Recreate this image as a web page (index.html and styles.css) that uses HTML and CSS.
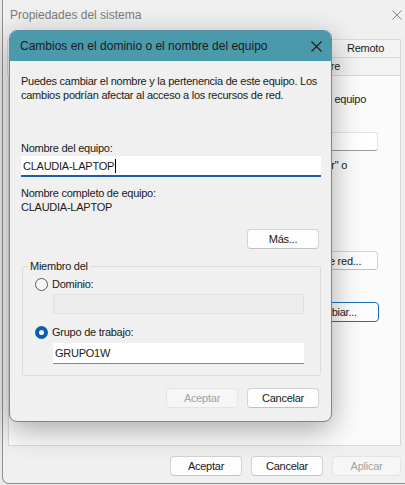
FILE: index.html
```html
<!DOCTYPE html>
<html lang="es">
<head>
<meta charset="utf-8">
<title>Propiedades del sistema</title>
<link rel="stylesheet" href="styles.css">
</head>
<body>
<div class="window">
  <div class="win-title">
    <span class="win-title-text">Propiedades del sistema</span>
    <svg class="win-close" width="10" height="10" viewBox="0 0 10 10"><path d="M0.5 0.5L9.5 9.5M9.5 0.5L0.5 9.5" stroke="#8a8a8a" stroke-width="1" fill="none"/></svg>
  </div>
  <div class="tabs">
    <div class="tab-row">
      <div class="tab tab-wide"></div>
      <div class="tab tab-wide"></div>
      <div class="tab tab-remote">Remoto</div>
    </div>
    <div class="tab-row">
      <div class="tab tab-first"></div>
      <div class="tab tab-hw"><span class="clip-right"><span>Hardware</span></span></div>
    </div>
  </div>
  <div class="panel">
    <div class="panel-right">
      <p class="pline pline-a">identificar su equipo</p>
      <div class="desc-box"></div>
      <p class="pline pline-b">"PC del comedor" o</p>
      <div class="btn btn-netid">Id. de red...</div>
      <div class="btn btn-change">Cambiar...</div>
    </div>
  </div>
  <div class="win-buttons">
    <div class="btn btn-main">Aceptar</div>
    <div class="btn btn-main">Cancelar</div>
    <div class="btn btn-main btn-disabled btn-apply">Aplicar</div>
  </div>

  <div class="dialog">
    <div class="dlg-title">
      <span class="dlg-title-text">Cambios en el dominio o el nombre del equipo</span>
      <svg class="dlg-close" width="11" height="11" viewBox="0 0 11 11"><path d="M0.5 0.5L10.5 10.5M10.5 0.5L0.5 10.5" stroke="#1b1b1b" stroke-width="1.1" fill="none"/></svg>
    </div>
    <div class="dlg-body">
      <p class="intro">Puedes cambiar el nombre y la pertenencia de este equipo. Los cambios podrían afectar al acceso a los recursos de red.</p>
      <div class="label label-name">Nombre del equipo:</div>
      <div class="field field-focus"><span>CLAUDIA-LAPTOP</span><span class="caret"></span></div>
      <div class="label label-full">Nombre completo de equipo:</div>
      <div class="label">CLAUDIA-LAPTOP</div>
      <div class="btn btn-dlg btn-more">Más...</div>
      <fieldset class="member">
        <legend>Miembro del</legend>
        <div class="member-inner">
          <div class="radio-row">
            <span class="radio"></span><span>Dominio:</span>
          </div>
          <div class="field field-disabled field-domain"></div>
          <div class="radio-row radio-row-2">
            <span class="radio radio-on"></span><span>Grupo de trabajo:</span>
          </div>
          <div class="field field-group"><span>GRUPO1W</span></div>
        </div>
      </fieldset>
      <div class="dlg-buttons">
        <div class="btn btn-dlg btn-disabled">Aceptar</div>
        <div class="btn btn-dlg">Cancelar</div>
      </div>
    </div>
  </div>
</div>
</body>
</html>
```

FILE: styles.css
```css
* { box-sizing: border-box; }

html, body {
  margin: 0;
  padding: 0;
}

body {
  width: 405px;
  height: 485px;
  overflow: hidden;
  background: #e9e9e9;
  font-family: "Liberation Sans", Arial, sans-serif;
  font-size: 11px;
  color: #1a1a1a;
  letter-spacing: -0.25px;
}

.window {
  position: relative;
  margin-left: 2px;
  width: 403px;
  height: 484px;
  background: #f0f0f0;
  border-left: 1px solid #8f8f8f;
  border-bottom: 1px solid #8f8f8f;
  border-bottom-left-radius: 7px;
  display: flex;
  flex-direction: column;
}

.win-title {
  height: 30px;
  display: flex;
  align-items: center;
  justify-content: space-between;
  padding: 0 3px 0 7px;
}

.win-title-text {
  font-size: 12px;
  color: #7c7c7c;
  letter-spacing: 0;
}

.tabs {
  margin: 9px 4px 0 5px;
}

.tab-row {
  display: flex;
  height: 18px;
}

.tab {
  height: 18px;
  line-height: 17px;
  text-align: center;
  background: #f3f3f3;
  border: 1px solid #d9d9d9;
  border-bottom: none;
  margin-left: -1px;
  white-space: nowrap;
  overflow: hidden;
}

.tab-wide { flex: 1; }
.tab-remote { width: 71px; }
.tab-first { width: 224px; }
.tab-hw {
  flex: 1;
  display: flex;
  justify-content: flex-end;
}

.clip-right {
  width: 70px;
  overflow: hidden;
  display: flex;
  justify-content: flex-end;
  padding-right: 60px;
}

.clip-right span { flex: none; }

.panel {
  height: 371px;
  margin: 0 4px 0 5px;
  background: #fbfbfb;
  border: 1px solid #d9d9d9;
  display: flex;
  justify-content: flex-end;
}

.panel-right {
  width: 69px;
  overflow: hidden;
  display: flex;
  flex-direction: column;
  align-items: flex-end;
  padding-right: 22px;
}

.pline {
  margin: 0;
  line-height: 14px;
  white-space: nowrap;
  flex: none;
}

.pline-a { margin-top: 16px; margin-right: 12px; }
.pline-b { margin-top: 7px; margin-right: 31px; }

.desc-box {
  margin-top: 26px;
  width: 250px;
  height: 19px;
  flex: none;
  background: #ffffff;
  border: 1px solid #e3e3e3;
  border-bottom-color: #9a9a9a;
  border-radius: 3px;
}

.btn {
  display: flex;
  align-items: center;
  justify-content: center;
  background: #fdfdfd;
  border: 1px solid #d3d3d3;
  border-bottom-color: #c2c2c2;
  border-radius: 4px;
  white-space: nowrap;
  flex: none;
}

.btn-netid {
  margin-top: 79px;
  width: 86px;
  height: 19px;
}

.btn-change {
  margin-top: 32px;
  width: 92px;
  height: 20px;
  border: 1px solid #1c6fb8;
  margin-right: -1px;
}

.win-buttons {
  display: flex;
  justify-content: flex-end;
  gap: 9px;
  margin-top: 10px;
  padding-right: 4px;
}

.btn-main {
  width: 72px;
  height: 20px;
}

.btn-apply { width: 69px; }

.btn-disabled {
  color: #a2a2a2;
  background: #f6f6f6;
  border-color: #e4e4e4;
}

/* Dialog lying over the window */
.dialog {
  position: absolute;
  left: 6px;
  top: 30px;
  width: 323px;
  background: #f0f0f0;
  border: 1px solid #5d8ea2;
  border-radius: 8px;
  overflow: hidden;
  box-shadow: 0 8px 30px rgba(0, 0, 0, 0.33);
}

.dlg-title {
  height: 30px;
  background: #4b9aab;
  display: flex;
  align-items: center;
  justify-content: space-between;
  padding: 0 9px 0 10px;
}

.dlg-title-text {
  font-size: 12px;
  color: #1a1a1a;
  letter-spacing: 0;
}

.dlg-body {
  display: flex;
  flex-direction: column;
  padding: 13px 10px 13px 11px;
}

.intro {
  margin: 0;
  line-height: 14px;
}

.label {
  line-height: 14px;
  white-space: nowrap;
}

.label-name { margin-top: 39px; }
.label-full { margin-top: 9px; }

.field {
  display: flex;
  align-items: center;
  background: #ffffff;
  padding: 0 2px;
}

.field-focus {
  margin-top: 1px;
  height: 21px;
  border-bottom: 2px solid #1a5fa6;
}

.caret {
  width: 1px;
  height: 14px;
  background: #000;
  margin-left: 1px;
}

.btn-more {
  align-self: flex-end;
  margin-top: 15px;
  margin-right: 2px;
  width: 72px;
  height: 19px;
}

.btn-dlg {
  width: 72px;
  height: 20px;
}

.member {
  margin: 10px 0 0 1px;
  padding: 0 0 11px 0;
  border: 1px solid #dcdcdc;
  border-radius: 3px;
  min-width: 0;
}

.member legend {
  margin-left: 5px;
  padding: 0 2px;
  line-height: 14px;
}

.member-inner {
  display: flex;
  flex-direction: column;
  padding: 4px 16px 0 12px;
}

.radio-row {
  display: flex;
  align-items: center;
  height: 14px;
  gap: 4px;
}

.radio-row-2 { margin-top: 11px; }

.radio {
  width: 13px;
  height: 13px;
  border-radius: 50%;
  border: 1px solid #5a5a5a;
  background: #f7f7f7;
  flex: none;
}

.radio-on {
  border: 4px solid #0a5fae;
  background: #ffffff;
}

.field-disabled {
  background: #ececec;
  border: 1px solid #e0e0e0;
  border-radius: 2px;
}

.field-domain {
  margin: 3px 0 0 18px;
  height: 20px;
}

.field-group {
  margin: 4px 0 0 18px;
  height: 21px;
  border-bottom: 1px solid #8a8a8a;
}

.dlg-buttons {
  display: flex;
  justify-content: flex-end;
  gap: 9px;
  margin-top: 12px;
  padding-right: 2px;
}
```
